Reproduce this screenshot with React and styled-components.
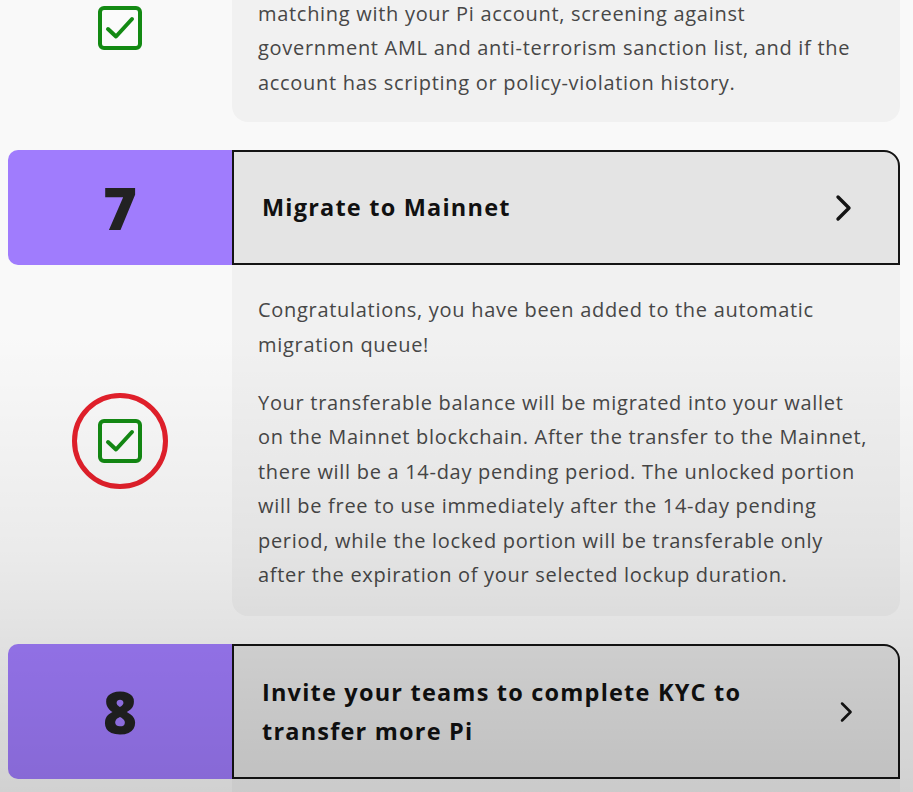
import React from "react";
import styled, { createGlobalStyle } from "styled-components";

const Global = createGlobalStyle`
  html, body { margin: 0; padding: 0; background: #f9f9f9; }
  body { font-family: "Open Sans", "Noto Sans", sans-serif; overflow: hidden; }
`;

const Page = styled.div`
  width: 913px;
  height: 792px;
  overflow: hidden;
  position: relative;
  background: #f9f9f9;
  &::after {
    content: "";
    position: absolute;
    inset: 0;
    pointer-events: none;
    background: linear-gradient(
      to bottom,
      rgba(0, 0, 0, 0) 0%,
      rgba(0, 0, 0, 0) 42%,
      rgba(0, 0, 0, 0.06) 70%,
      rgba(0, 0, 0, 0.16) 100%
    );
  }
`;

const List = styled.div`
  display: flex;
  flex-direction: column;
  gap: 28px;
  margin-top: -67px;
  padding: 0 13px 0 8px;
`;

const Step = styled.section`
  display: flex;
  flex-direction: column;
`;

const Header = styled.div`
  display: grid;
  grid-template-columns: 224px 1fr;
  min-height: ${(p) => p.$h}px;
`;

const Number = styled.div`
  background: #a07cfd;
  border-radius: 10px 0 0 10px;
  display: flex;
  align-items: center;
  justify-content: center;
  font-family: "Open Sans", sans-serif;
  font-weight: 800;
  font-size: 58px;
  color: #222;
  line-height: 1;
`;

const TitleBox = styled.div`
  background: #e4e4e4;
  border: 2px solid #141414;
  border-top-right-radius: 16px;
  display: flex;
  align-items: center;
  justify-content: space-between;
  padding: 0 44px 0 28px;
  gap: 40px;
`;

const Title = styled.h3`
  margin: 0;
  font-family: "Open Sans", sans-serif;
  font-weight: 700;
  font-size: 23.5px;
  letter-spacing: 1.2px;
  line-height: 39px;
  color: #111;
`;

const Body = styled.div`
  display: grid;
  grid-template-columns: 224px 1fr;
`;

const CheckCell = styled.div`
  display: flex;
  align-items: center;
  justify-content: center;
  position: relative;
`;

const Circle = styled.div`
  position: absolute;
  width: 86px;
  height: 86px;
  border: 5px solid #e3202b;
  border-radius: 50%;
  left: 50%;
  top: 50%;
  transform: translate(-50%, -50%);
`;

const Panel = styled.div`
  background: #f1f1f1;
  border-radius: 0 0 16px 16px;
  padding: ${(p) => p.$top ?? 28}px 26px ${(p) => p.$bottom ?? 24}px 26px;
  min-height: ${(p) => p.$min || 0}px;
  display: flex;
  flex-direction: column;
  gap: 24px;
`;

const Para = styled.p`
  margin: 0;
  font-family: "Open Sans", sans-serif;
  font-size: 20px;
  letter-spacing: 0.7px;
  line-height: 34.4px;
  color: #474747;
`;

const Check = () => (
  <svg width="46" height="46" viewBox="0 0 46 46" fill="none">
    <rect x="3" y="3" width="40" height="40" rx="4" stroke="#138a13" strokeWidth="4" fill="#fbfbfb" />
    <path d="M11 24 L19 31.5 L35 14" stroke="#138a13" strokeWidth="4" strokeLinecap="round" strokeLinejoin="round" />
  </svg>
);

const Chevron = () => (
  <svg width="20" height="28" viewBox="0 0 20 28" fill="none">
    <path d="M4 3 L15 14 L4 25" stroke="#141414" strokeWidth="3.4" strokeLinecap="round" strokeLinejoin="round" />
  </svg>
);

const StepHeader = ({ n, title, h }) => (
  <Header $h={h}>
    <Number>{n}</Number>
    <TitleBox>
      <Title>{title}</Title>
      <Chevron />
    </TitleBox>
  </Header>
);

const StepBody = ({ paras, circled, top, bottom }) => (
  <Body>
    <CheckCell>
      {circled && <Circle />}
      <Check />
    </CheckCell>
    <Panel $top={top} $bottom={bottom}>
      {paras.map((p, i) => (
        <Para key={i}>{p}</Para>
      ))}
    </Panel>
  </Body>
);

export default function App() {
  return (
    <Page>
      <Global />
      <List>
        <Step>
          <StepBody
            top={64}
            bottom={22}
            paras={[
              <>
                matching with your Pi account, screening against
                <br />
                government AML and anti-terrorism sanction list, and if the account has scripting or policy-violation history.
              </>,
            ]}
          />
        </Step>
        <Step>
          <StepHeader n="7" title="Migrate to Mainnet" h={115} />
          <StepBody
            circled
            paras={[
              "Congratulations, you have been added to the automatic migration queue!",
              "Your transferable balance will be migrated into your wallet on the Mainnet blockchain. After the transfer to the Mainnet, there will be a 14-day pending period. The unlocked portion will be free to use immediately after the 14-day pending period, while the locked portion will be transferable only after the expiration of your selected lockup duration.",
            ]}
          />
        </Step>
        <Step>
          <StepHeader n="8" title="Invite your teams to complete KYC to transfer more Pi" h={135} />
          <Body>
            <div />
            <Panel $min={60} />
          </Body>
        </Step>
      </List>
    </Page>
  );
}
